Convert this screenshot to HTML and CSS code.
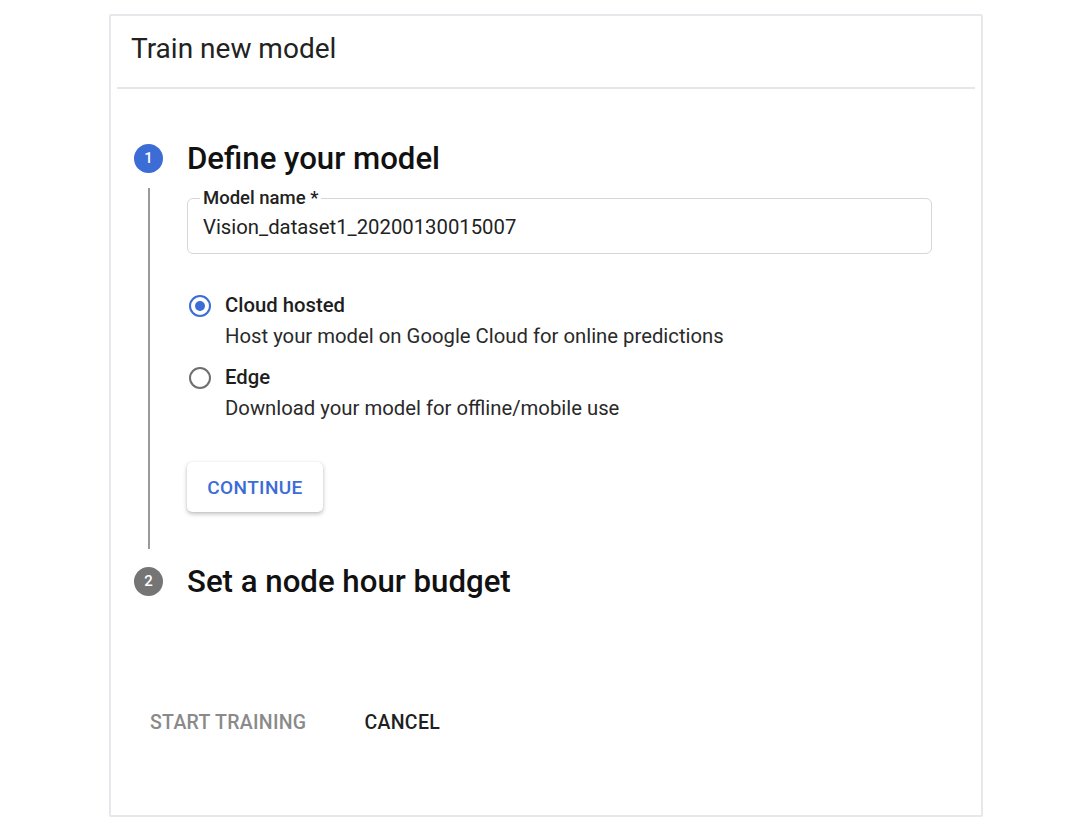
FILE: index.html
```html
<!DOCTYPE html>
<html lang="en">
<head>
  <meta charset="UTF-8" />
  <title>Train new model</title>
  <link rel="stylesheet" href="styles.css">
</head>
<body>

  <div class="dialog">
    <header class="dialog-header">
      <h1>Train new model</h1>
    </header>

    <section class="stepper">
      <div class="step active">
        <div class="step-title">
          <span class="step-num">1</span>
          <h2>Define your model</h2>
        </div>
        <div class="step-body">
          <fieldset class="field">
            <legend>Model name *</legend>
            <input type="text" value="Vision_dataset1_20200130015007">
          </fieldset>

          <div class="options">
            <label class="option">
              <span class="radio checked"></span>
              <span class="option-text">
                <strong>Cloud hosted</strong>
                <span>Host your model on Google Cloud for online predictions</span>
              </span>
            </label>
            <label class="option">
              <span class="radio"></span>
              <span class="option-text">
                <strong>Edge</strong>
                <span>Download your model for offline/mobile use</span>
              </span>
            </label>
          </div>

          <button class="raised">CONTINUE</button>
        </div>
      </div>

      <div class="step">
        <div class="step-title">
          <span class="step-num gray">2</span>
          <h2>Set a node hour budget</h2>
        </div>
      </div>
    </section>

    <div class="dialog-actions">
      <button class="flat disabled">START TRAINING</button>
      <button class="flat">CANCEL</button>
    </div>
  </div>

</body>
</html>
```

FILE: styles.css
```css
* { box-sizing: border-box; margin: 0; padding: 0; font-family: Roboto, "Liberation Sans", sans-serif; }
body { background: #fff; color: #202124; }

.dialog {
  width: 874px;
  height: 803px;
  margin: 14px 0 0 109px;
  border: 2px solid #e8e8ec;
  border-radius: 2px;
  padding: 0 6px;
}

.dialog-header {
  height: 73px;
  border-bottom: 2px solid #e6e6e8;
  padding: 16px 0 0 14px;
}
.dialog-header h1 {
  font-size: 28px;
  font-weight: 400;
  color: #222;
}

.stepper {
  padding: 54px 0 0 17px;
}
.step-title {
  display: flex;
  align-items: center;
  height: 30px;
}
.step-num {
  width: 29px;
  height: 29px;
  border-radius: 50%;
  background: #3c6cd6;
  color: #fff;
  font-size: 15px;
  font-weight: 500;
  display: flex;
  align-items: center;
  justify-content: center;
  margin-right: 24px;
}
.step-num.gray { background: #757575; }
.step-title h2 {
  font-size: 31.2px;
  font-weight: 500;
  color: #111;
}

.step-body {
  margin: 15px 0 17px 14px;
  border-left: 2px solid #9a9a9a;
  padding: 0 0 37px 37px;
}

.field {
  width: 745px;
  border: 1px solid #d6d6d6;
  border-radius: 6px;
  padding: 0 15px 14px;
}
.field legend {
  font-size: 18.5px;
  font-weight: 500;
  color: #222;
  padding: 0 3px;
  margin-left: -3px;
  line-height: 20px;
}
.field input {
  border: none;
  outline: none;
  width: 100%;
  font-size: 20.3px;
  line-height: 24px;
  color: #222;
  background: transparent;
  padding: 7px 0 0 0;
}

.options {
  margin-top: 36px;
  display: flex;
  flex-direction: column;
  gap: 10px;
}
.option {
  display: flex;
  align-items: flex-start;
}
.radio {
  width: 22px;
  height: 22px;
  border: 2px solid #6f6f6f;
  border-radius: 50%;
  margin: 5px 14px 0 2px;
  position: relative;
  flex-shrink: 0;
}
.radio.checked { border-color: #3c6cd6; }
.radio.checked::after {
  content: "";
  position: absolute;
  left: 4px;
  top: 4px;
  width: 10px;
  height: 10px;
  border-radius: 50%;
  background: #3c6cd6;
}
.option-text {
  display: flex;
  flex-direction: column;
  font-size: 20.3px;
  line-height: 31px;
  color: #2a2a2a;
}
.option-text strong { font-weight: 500; color: #1e1e1e; }

.raised {
  margin-top: 38px;
  width: 136px;
  height: 50px;
  border: none;
  border-radius: 5px;
  background: #fff;
  color: #3c6cd6;
  font-size: 19px;
  font-weight: 500;
  letter-spacing: 0.4px;
  box-shadow: 0 2px 4px rgba(0,0,0,0.25), 0 0 1px rgba(0,0,0,0.15);
  cursor: pointer;
}

.dialog-actions {
  display: flex;
  gap: 42px;
  margin: 107px 0 0 25px;
}
.flat {
  border: none;
  background: none;
  font-size: 19.5px;
  font-weight: 500;
  letter-spacing: 0.3px;
  color: #1f1f1f;
  padding: 8px 8px;
  cursor: pointer;
}
.flat.disabled { color: #8a8a8a; }
```
